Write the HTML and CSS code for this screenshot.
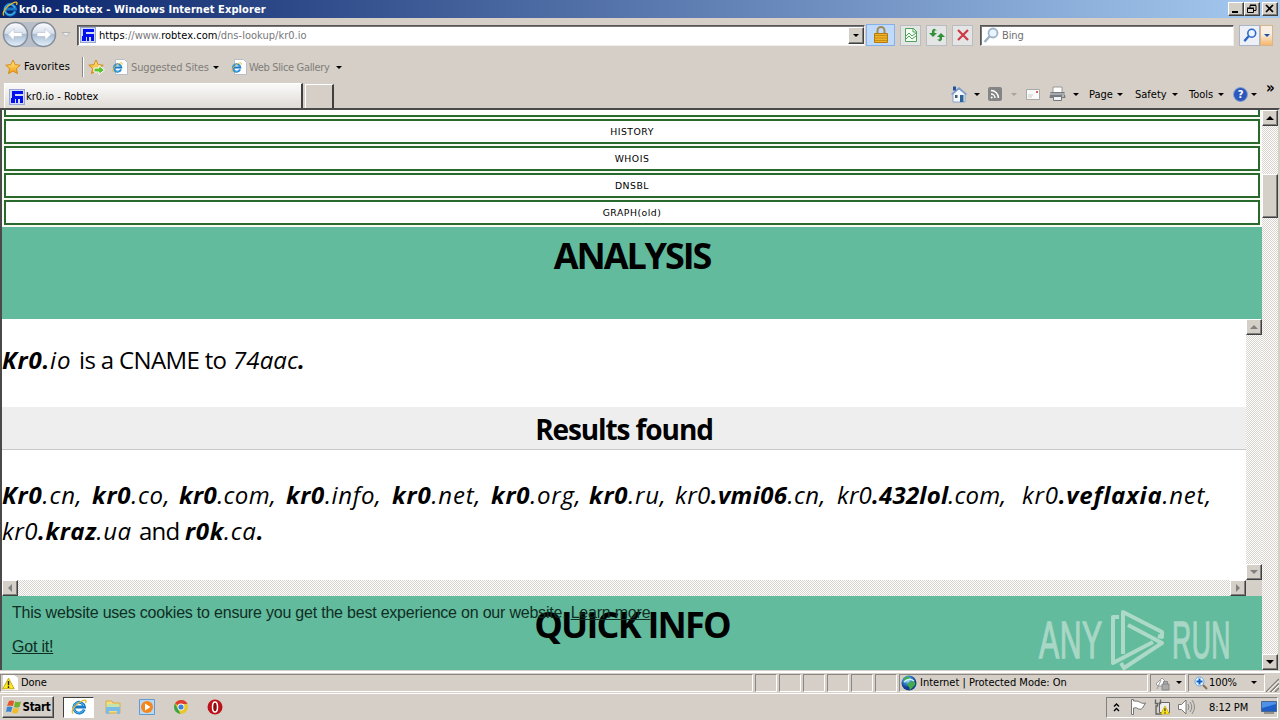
FILE: index.html
```html
<!DOCTYPE html>
<html lang="en">
<head>
<meta charset="utf-8">
<title>kr0.io - Robtex</title>
<link rel="stylesheet" href="styles.css">
</head>
<body>
<svg class="defs" width="0" height="0">
  <defs>
    <linearGradient id="gold" x2="0" y2="1"><stop offset="0" stop-color="#fff08a"/><stop offset="1" stop-color="#f39a12"/></linearGradient>
    <linearGradient id="orb" x2="0" y2="1"><stop offset="0" stop-color="#fdfdfe"/><stop offset=".45" stop-color="#d5dfeb"/><stop offset=".5" stop-color="#a9bdd4"/><stop offset="1" stop-color="#e5f1fc"/></linearGradient>
    <radialGradient id="globe" cx=".4" cy=".3"><stop offset="0" stop-color="#d7f1ff"/><stop offset=".5" stop-color="#3c8fd6"/><stop offset="1" stop-color="#15408c"/></radialGradient>
    <symbol id="ie" viewBox="0 0 16 16"><path d="M13.2 10.6A5.4 5.4 0 1 1 13.5 8H4" fill="none" stroke="#1679c8" stroke-width="2.8"/><path d="M12.9 10.4A5.3 5.3 0 1 1 13 7.2" fill="none" stroke="#55c1f2" stroke-width="1"/><path d="M2 14.5C-.5 12 4 6 9 3s7-2 5.500 1" fill="none" stroke="#e9b92a" stroke-width="1.300"/></symbol>
    <symbol id="iepage" viewBox="0 0 16 16"><path d="M3.500.5h9l3 3v12h-12z" fill="#fff" stroke="#b9bec4"/><use href="#ie" x="0" y="3" width="11" height="11"/></symbol>
    <symbol id="rob" viewBox="0 0 16 16"><path fill="#98a6d4" d="M0 0h16v16H0z"/><path fill="#d2daf2" d="M1 1h14v14H1z"/><path fill="#0010ee" d="M3 2h11v3H6v2h8v7h-3v-4H9v4H7v-4H6v4H2V9h1z"/></symbol>
    <symbol id="star" viewBox="0 0 16 16"><path d="M8 1l2.100 4.700 5.100.5-3.800 3.400 1.100 5L8 12l-4.500 2.600 1.100-5L.8 6.200l5.100-.5z" fill="url(#gold)" stroke="#d78a16"/></symbol>
    <symbol id="mag" viewBox="0 0 16 16"><circle cx="10" cy="6" r="4.500" fill="#e8f5ff" stroke="currentColor" stroke-width="1.800"/><path d="M6.500 9.500L1.500 15" stroke="currentColor" stroke-width="2.600"/></symbol>
    <symbol id="warn" viewBox="0 0 16 16"><path d="M8 1.500l7 13H1z" fill="#ffe81c" stroke="#b89b00"/><path d="M8 5v5M8 11.500v2" stroke="#222" stroke-width="1.800"/></symbol>
  </defs>
</svg>
<div class="screen">
  <header class="title">
    <svg class="title-icon"><use href="#ie"/></svg>
    <span class="title-text">kr0.io - Robtex - Windows Internet Explorer</span>
    <div class="winbtns">
      <div class="btn wb"><svg viewBox="0 0 14 12"><path d="M3 9h6" stroke="#000" stroke-width="2"/></svg></div>
      <div class="btn wb"><svg viewBox="0 0 14 12"><path d="M5 5V2.500h6V7.500H9M5 2h6M2.500 5.500h6v4h-6zM2 5h7" fill="none" stroke="#000"/></svg></div>
      <div class="btn wb last"><svg viewBox="0 0 14 12"><path d="M3 2l7 7M10 2L3 9" stroke="#000" stroke-width="1.700"/></svg></div>
    </div>
  </header>

  <div class="nav">
    <svg class="orbs" viewBox="0 0 72 30">
      <path d="M15 2h28v25H15z" fill="#b9bfc9"/>
      <circle cx="15.500" cy="14.500" r="12" fill="url(#orb)" stroke="#858d99" stroke-width="1.500"/>
      <circle cx="43.500" cy="14.500" r="12" fill="url(#orb)" stroke="#858d99" stroke-width="1.500"/>
      <path d="M8 14.500l6-6v4h8v4h-8v4z" fill="#fff" stroke="#b1bccb" stroke-width=".6"/>
      <path d="M51 14.500l-6-6v4h-8v4h8v4z" fill="#fff" stroke="#b1bccb" stroke-width=".6"/>
      <path d="M62 12.500h8l-4 4z" fill="#eee" stroke="#aaa" stroke-width=".8"/>
    </svg>
    <div class="address">
      <svg class="i16"><use href="#rob"/></svg>
      <span class="url"><b>https</b>://www.<b>robtex.com</b>/dns-lookup/kr0.io</span>
      <div class="btn drop"><i class="arr"></i></div>
    </div>
    <div class="lock"><svg width="16" height="18" viewBox="0 0 16 18"><path d="M4.500 9V4.500a3.500 3.500 0 0 1 7 0V9" fill="none" stroke="#a28a55" stroke-width="2"/><path d="M1.500 7.500h13v9h-13z" fill="#eeb32b" stroke="#b57a0c"/><path d="M2 9.500h12M2 12h12M2 14.500h12" stroke="#c98c13"/></svg></div>
    <div class="tool t1"><svg width="16" height="16" viewBox="0 0 16 16"><path d="M2.500 1.500h8l3 3v10h-11z" fill="#f4fff4" stroke="#4f9f5d"/><path d="M10 1v4h4M3 9l3-3 3 3 4-3M3 12l3-3 3 3 4-3" fill="none" stroke="#4f9f5d"/></svg></div>
    <div class="tool t2"><svg width="16" height="16" viewBox="0 0 16 16"><path d="M8 3.500H5.500V6H8l-4 4-4-4h3V3.500L5 1.500zM8 12.500h2.500V10H8l4-4 4 4h-3v2.500l-2 2z" fill="#2f9138"/></svg></div>
    <div class="tool t3"><svg width="16" height="16" viewBox="0 0 16 16"><path d="M3 3l10 10M13 3L3 13" stroke="#cf3a44" stroke-width="2.200"/></svg></div>
    <div class="search"><svg class="i16 grey"><use href="#mag"/></svg><span>Bing</span></div>
    <div class="go"><svg width="14" height="14"><use href="#mag"/></svg></div>
    <div class="godrop"><i class="arr blue"></i></div>
  </div>

  <div class="favs">
    <svg class="i16"><use href="#star"/></svg><span class="favlabel">Favorites</span>
    <i class="sep"></i>
    <svg class="addfav" width="18" height="16" viewBox="0 0 18 16"><use href="#star" width="16" height="16"/><path d="M6 9h5V6.500l5.500 4.500-5.500 4.500V13H6z" fill="#5ac431" stroke="#fff"/></svg>
    <svg class="i16 sug"><use href="#iepage"/></svg><span class="muted sugtext">Suggested Sites</span><i class="arr"></i>
    <svg class="i16 web"><use href="#iepage"/></svg><span class="muted webtext">Web Slice Gallery</span><i class="arr"></i>
  </div>

  <div class="tabs">
    <div class="tab"><svg class="i16"><use href="#rob"/></svg><span>kr0.io - Robtex</span></div>
    <div class="newtab"></div>
    <div class="cmds">
      <svg class="home" width="18" height="18" viewBox="0 0 18 18"><path d="M3 9l6-5 6 5v8H3z" fill="#f4f8ff" stroke="#8ba4c8"/><path d="M1.500 9.500L9 3l7.500 6.500" fill="none" stroke="#7d9cc9" stroke-width="1.600"/><path d="M3 1.500h3v4H3z" fill="#274f9a"/><path d="M10 10h3.500v7H10z" fill="#2c6496"/><path d="M5 10h2.500v3H5z" fill="#4c5967"/></svg><i class="arr home-a"></i>
      <svg class="rss" width="14" height="14" viewBox="0 0 14 14"><rect width="14" height="14" rx="2" fill="#858585"/><path d="M3 7a4 4 0 0 1 4 4M3 3.500A7.500 7.500 0 0 1 10.500 11" fill="none" stroke="#fff" stroke-width="1.500"/><circle cx="3.700" cy="10.500" r="1" fill="#fff"/></svg><i class="arr dim rss-a"></i>
      <svg class="mail" width="14" height="11" viewBox="0 0 14 11"><path d="M.5.500h13v10H.5z" fill="#fafafa" stroke="#a8a8a8"/><path d="M10 2h2v2h-2z" fill="#c76767"/><path d="M2 6h5M2 8h4" stroke="#ccc"/></svg>
      <svg class="print" width="17" height="16" viewBox="0 0 17 16"><path d="M4 1h9v6H4z" fill="#fff" stroke="#999"/><path d="M1.500 6h14l1 6H.5z" fill="#787c82"/><path d="M1 8h15" stroke="#d2d6da"/><path d="M4.500 10.500h8v4h-8z" fill="#eef5fc" stroke="#777"/><circle cx="14" cy="10" r="1" fill="#c3ccc0"/></svg><i class="arr print-a"></i>
      <span class="page">Page</span><i class="arr page-a"></i>
      <span class="safety">Safety</span><i class="arr safe-a"></i>
      <span class="tools">Tools</span><i class="arr tools-a"></i>
      <div class="help">?</div><i class="arr help-a"></i>
      <span class="more">»</span>
    </div>
  </div>

  <div class="viewport">
    <main class="doc">
      <nav class="menu">
        <div class="item cut"></div>
        <div class="item">HISTORY</div>
        <div class="item">WHOIS</div>
        <div class="item">DNSBL</div>
        <div class="item">GRAPH(old)</div>
      </nav>
      <section class="band analysis"><h1>ANALYSIS</h1></section>
      <section class="frame">
        <div class="frame-doc">
          <p class="first"><em class="c1"><b>Kr0.</b>io</em><span class="c2">is a CNAME to</span><em class="c3">74aac<b>.</b></em></p>
          <h2><span>Results found</span></h2>
          <p class="line"><em class="d1"><b>Kr0</b>.cn,</em><em class="d2"><b>kr0</b>.co,</em><em class="d3"><b>kr0</b>.com,</em><em class="d4"><b>kr0</b>.info,</em><em class="d5"><b>kr0</b>.net,</em><em class="d6"><b>kr0</b>.org,</em><em class="d7"><b>kr0</b>.ru,</em><em class="d8">kr0<b>.vmi06</b>.cn,</em><em class="d9">kr0<b>.432lol</b>.com,</em><em class="d10">kr0<b>.veflaxia</b>.net,</em></p>
          <p class="line"><em class="e1">kr0<b>.kraz</b>.ua</em><span class="e2">and</span><em class="e3"><b>r0k</b>.ca<b>.</b></em></p>
        </div>
        <div class="vbar"><div class="btn sb"><i class="up dis"></i></div><div class="btn sb"><i class="arr big dis"></i></div></div>
        <div class="hbar"><div class="btn sb"><i class="left dis"></i></div><div class="btn sb"><i class="right dis"></i></div></div>
        <div class="corner"></div>
      </section>
      <section class="band quick">
        <h1>QUICK INFO</h1>
        <div class="cookie"><div class="msg">This website uses cookies to ensure you get the best experience on our website. <u>Learn more</u></div><u class="got">Got it!</u></div>
        <div class="mark">
          <span class="any">ANY</span>
          <svg width="56" height="62" viewBox="0 0 56 62"><g fill="none" stroke="#b9dfd0" stroke-width="4" stroke-linejoin="round"><path d="M9 8H3v46L43 33"/><path d="M13 45V3l39 20v5l-4-1"/><path d="M18 16l34 18L14 59l-3-5"/></g></svg>
          <span class="run">RUN</span>
        </div>
      </section>
    </main>
    <div class="scroll"><div class="btn sb"><i class="up"></i></div><div class="btn thumb"></div><div class="btn sb end"><i class="arr big"></i></div></div>
  </div>

  <div class="status">
    <div class="pane done"><svg width="16" height="16" viewBox="0 0 16 16"><path d="M1 0h11l4 3v12H1z" fill="#fff"/><use href="#warn" y="2" width="13" height="13"/></svg><span>Done</span></div>
    <div class="pane s"></div><div class="pane s"></div><div class="pane s"></div><div class="pane s"></div><div class="pane s"></div><div class="pane s"></div>
    <div class="pane zone"><svg width="16" height="16" viewBox="0 0 16 16"><circle cx="8" cy="8" r="7.500" fill="url(#globe)"/><path d="M3 3q4-3 6 0L6 6 3 7zM9 7l4-1q3 3-1 6l-3 3q-1-4-3-6z" fill="#43ac48"/><path d="M3 7q5-5 10-1" fill="none" stroke="#cef2ff" stroke-width="1.500"/></svg><span>Internet | Protected Mode: On</span></div>
    <div class="pane priv"><svg width="16" height="16" viewBox="0 0 16 16"><path d="M1 9l6-6 4 4-3 4H3zM2 14l4-9" fill="#fff" stroke="#999"/><path d="M7 9h7v6H7zM8.500 9V6.500h4V9" fill="#aaa" stroke="#888"/></svg><i class="arr"></i></div>
    <div class="pane zoom"><svg width="14" height="14" viewBox="0 0 14 14"><circle cx="5.500" cy="5.500" r="4.500" fill="#eaf5ff" stroke="#6ea6da"/><path d="M9 9l4 4" stroke="#8b6e52" stroke-width="2"/><path d="M2.500 5.500h6M5.500 2.500v6" stroke="#1263c5" stroke-width="2"/></svg><span>100%</span><i class="arr"></i></div>
    <svg class="grip" width="13" height="14" viewBox="0 0 13 14"><path d="M0 14L13 1M4.500 14L13 5.500M9 14l4-4" stroke="#817d76" stroke-width="1.500"/><path d="M1.500 14L13 2.500M6 14l7-7" stroke="#fff"/></svg>
  </div>

  <footer class="task">
    <div class="btn start"><svg width="16" height="16" viewBox="0 0 16 16"><path d="M3 2q2-1 5 0L7 7Q4 6 1 7z" fill="#e55427"/><path d="M9 2.500q3 1 6 0L13.500 8q-3 1-5.500 0z" fill="#73b02e"/><path d="M1 8q3-1 5.500 0L5 13q-3-1-5 0z" fill="#3985d0"/><path d="M7.500 9q3 1 5.500 0l-1.500 5q-3 1-5.500-.5z" fill="#f3ba24"/></svg><span>Start</span></div>
    <div class="active"><svg class="i16"><use href="#ie"/></svg></div>
    <svg class="q q1" viewBox="0 0 16 16"><path d="M1 2h6l1 2h7v10H1z" fill="#f4dc83" stroke="#d7ad43"/><path d="M2 5h12v4H2z" fill="#c5e3ac"/><path d="M1 8h14v7h-3v-3H4v3H1z" fill="#79bce9"/></svg>
    <svg class="q q2" viewBox="0 0 16 16"><path d="M.5.500h15v15H.5z" fill="#b8d9f6" stroke="#629bd0"/><circle cx="8" cy="8" r="6" fill="#f4861b"/><path d="M6 4.500v7l5.500-3.500z" fill="#fff"/></svg>
    <svg class="q q3" viewBox="0 0 16 16"><circle cx="8" cy="8" r="7" fill="#e8c72c"/><path d="M8 8L2 4.500A7 7 0 0 1 14.500 5H8z" fill="#dd3e31"/><path d="M2 4.500L6 12l1.500 3A7 7 0 0 1 2 4.500z" fill="#37a654"/><circle cx="8" cy="8" r="3.400" fill="#fff"/><circle cx="8" cy="8" r="2.600" fill="#3f80d8"/></svg>
    <svg class="q q4" viewBox="0 0 16 16"><circle cx="8" cy="8" r="7.500" fill="#bd1119"/><ellipse cx="8" cy="8" rx="2.500" ry="5" fill="#8f080e" stroke="#fff" stroke-width="1.500"/></svg>
    <div class="tray">
      <svg class="chev" width="7" height="9" viewBox="0 0 7 9"><path d="M1 3.500L3.500 1 6 3.500M1 8l2.500-2.500L6 8" fill="none" stroke="#000" stroke-width="1.400"/></svg>
      <svg class="flag" width="17" height="16" viewBox="0 0 17 16"><path d="M1.500.5v15h2V9q3-1 5 1 3 1 4-1l3-5q-3 1-5-.500Q8 1.500 3.500 2V.5z" fill="#fff" stroke="#777"/></svg>
      <svg class="net" width="17" height="16" viewBox="0 0 17 16"><path d="M5.500 3.500h10v10h-10z" fill="#eee" stroke="#666"/><path d="M1.500.5v4h2V7H2v8h6M6.500.5v4h-2" fill="none" stroke="#666" stroke-width="1.400"/><use href="#warn" x="6" y="6" width="10" height="10"/></svg>
      <svg class="vol" width="17" height="16" viewBox="0 0 17 16"><path d="M.5 5.500h3L8 1v14l-4.500-4.500h-3z" fill="#fff" stroke="#777"/><path d="M10 5q2 3 0 6M12 3q3.500 5 0 10M14 1q5 7 0 14" fill="none" stroke="#888"/></svg>
      <span class="clock">8:12 PM</span>
      <svg class="desk" width="16" height="13" viewBox="0 0 16 13"><path d="M.5.500h15v10H.5z" fill="#1d5fc6" stroke="#4b6790"/><path d="M1 7L15 3V1H1z" fill="#4d92e8"/><path d="M3 12h10" stroke="#555"/></svg>
    </div>
  </footer>
</div>
</body>
</html>
```

FILE: styles.css
```css
* { box-sizing: border-box; }
body { margin: 0; overflow: hidden; background: #d4d0c8; }
svg { display: block; flex: none; }
.defs { position: absolute; }
.screen { width: 1280px; height: 720px; display: flex; flex-direction: column; background: #d5cfc7; font: 11px/14px "DejaVu Sans Condensed", "DejaVu Sans", sans-serif; letter-spacing: -0.1px; color: #000; white-space: nowrap; }
.i16 { width: 16px; height: 16px; }
.arr { flex: none; width: 0; height: 0; border: 3px solid transparent; border-top-color: #000; border-bottom: 0; }
.arr.big { border-width: 4px 4px 0; }
.arr.dim { border-top-color: #a6a29c; }
.arr.blue { border-top-color: #1c4f9c; }
.up, .left, .right { width: 0; height: 0; border: 4px solid transparent; }
.up { border-top: 0; border-bottom-color: #000; }
.left { border-left: 0; border-right-color: #808080; }
.right { border-right: 0; border-left-color: #808080; }
.arr.dis { border-top-color: #808080; }
.up.dis { border-bottom-color: #808080; }
.btn { display: flex; align-items: center; justify-content: center; flex: none; background: #d4d0c8; border: 1px solid; border-color: #fff #404040 #404040 #fff; box-shadow: inset -1px -1px #808080; }
.sb { width: 16px; height: 16px; }

.title { height: 18px; flex: none; display: flex; align-items: center; padding: 0 2px 0 2px; background: linear-gradient(90deg, #0a246a, #a6caf0); color: #fff; }
.title-icon { width: 16px; height: 16px; }
.title-text { flex: 1; margin-left: 1px; padding-top: 1px; font-weight: bold; letter-spacing: 0.08px; }
.winbtns { display: flex; }
.wb { width: 16px; height: 14px; }
.wb svg { width: 14px; height: 12px; }
.wb.last { margin-left: 2px; }

.nav { height: 36px; flex: none; display: flex; align-items: center; padding: 0 4px 2px 0; }
.orbs { width: 72px; height: 30px; }
.address { width: 788px; height: 21px; margin-left: 5px; display: flex; align-items: center; padding-left: 2px; background: #fff; border: 1px solid; border-color: #555 #eee #eee #555; box-shadow: inset 1px 1px #777; }
.url { flex: 1; margin-left: 3px; padding-top: 2px; color: #77777a; letter-spacing: 0.02px; }
.url b { font-weight: normal; color: #000; }
.drop { width: 16px; height: 17px; margin-right: 0; }
.lock { width: 29px; height: 22px; margin-left: 1px; display: flex; align-items: center; justify-content: center; background: #bfdafb; border: 1px solid #85b1ea; }
.tool { width: 21px; height: 21px; display: flex; align-items: center; justify-content: center; background: #e4e5e5; border: 1px solid #b9bdc2; }
.t1 { margin-left: 5px; }
.t2, .t3 { margin-left: 5px; }
.search { width: 254px; height: 21px; margin-left: 7px; padding-left: 2px; display: flex; align-items: center; gap: 3px; background: #fff; color: #707070; border: 1px solid; border-color: #555 #eee #eee #555; box-shadow: inset 1px 1px #777; }
.search span { padding-top: 2px; }
.grey { color: #9fb3c7; }
.go { width: 21px; height: 21px; margin-left: 5px; display: flex; align-items: center; justify-content: center; background: #edf0f5; border: 1px solid #aab5c8; color: #2a64cb; }
.godrop { width: 13px; height: 21px; display: flex; align-items: center; justify-content: center; background: linear-gradient(#f7eee4 40%, #f7b66b); border: 1px solid #d8b58c; }

.favs { height: 26px; flex: none; display: flex; align-items: center; padding-left: 5px; }
.favlabel { width: 48px; margin-left: 3px; letter-spacing: 0.15px; }
.sep { width: 2px; height: 20px; margin-left: 10px; border-left: 1px solid #888; border-right: 1px solid #fff; }
.addfav { margin-left: 4px; }
.sug { margin-left: 6px; }
.muted { color: #817e7a; margin-left: 3px; padding-top: 1px; letter-spacing: -0.15px; }
.sugtext { width: 82px; }
.web { margin-left: 12px; }
.webtext { width: 87px; letter-spacing: -0.35px; margin-left: 2px; }

.tabs { height: 28px; flex: none; display: flex; align-items: flex-end; padding-left: 4px; }
.tab { width: 299px; height: 25px; display: flex; align-items: center; gap: 1px; padding: 2px 0 0 4px; letter-spacing: 0; background: linear-gradient(#fbfaf9, #dfdbd6); border-top: 1px solid #fff; border-left: 1px solid #fff; border-right: 2px solid #404040; }
.newtab { width: 29px; height: 24px; margin-left: 2px; border: 1px solid #fff; border-right: 2px solid #404040; border-bottom: 0; }
.cmds { height: 28px; margin-left: 616px; display: flex; align-items: center; letter-spacing: 0; }
.cmds span { padding-top: 1px; }
.home-a { margin-left: 6px; }
.rss { margin-left: 8px; }
.rss-a { margin-left: 9px; }
.mail { margin-left: 9px; }
.print { margin-left: 9px; }
.print-a { margin-left: 7px; }
.page { width: 25px; margin-left: 10px; }
.page-a { margin-left: 3px; }
.safety { width: 34px; margin-left: 12px; }
.safe-a { margin-left: 3px; }
.tools { width: 26px; margin-left: 11px; }
.tools-a { margin-left: 3px; }
.help { width: 15px; height: 15px; margin-left: 9px; border-radius: 50%; background: #2c58bb; border: 1px solid #8aa3d4; color: #fff; font-weight: bold; text-align: center; line-height: 13px; }
.help-a { margin-left: 3px; }
.more { margin: -13px 0 0 9px; font-size: 15px; font-weight: bold; }

.viewport { height: 562px; flex: none; display: flex; border-left: 2px solid #4a4a4a; border-top: 2px solid #4a4a4a; border-right: 2px solid #d4d0c8; }
.doc { width: 1260px; height: 560px; background: #fff; overflow: hidden; color: #000; }
.menu { height: 117px; display: flex; flex-direction: column; gap: 2px; padding: 0 2px; background: #f8fbf4; }
.item { height: 25px; flex: none; border: 2px solid #2a692c; background: #fff; text-align: center; font: 9.3px/21px "DejaVu Sans", sans-serif; letter-spacing: 0.5px; }
.item.cut { height: 7px; border-top: 0; }
.band { background: #62bb9d; text-align: center; }
h1, h2, p { margin: 0; }
h1 { font: bold 36px/46px "Open Sans", sans-serif; }
.analysis { height: 92px; padding-top: 6px; }
.analysis h1 { letter-spacing: -2.1px; }
.frame { height: 277px; display: grid; grid-template: 261px 16px / 1244px 16px; }
.frame-doc { background: #fff; overflow: hidden; font: 24px/36px "Open Sans", sans-serif; letter-spacing: -0.4px; }
.first { height: 88px; padding-top: 23px; display: flex; }
.c1 { width: 77px; letter-spacing: 0.8px; } .c2 { width: 154px; letter-spacing: -0.65px; } .c3 { letter-spacing: 0.1px; }
h2 { height: 43px; background: #eee; border-bottom: 1px solid #c9c9c9; text-align: center; font: bold 28px/44px "Open Sans", sans-serif; letter-spacing: -1.1px; }
.line { display: flex; height: 36px; }
h2 + .line { margin-top: 27px; }
.line em, .line span { flex: none; }
.d1 { width: 90px; letter-spacing: 0.85px; }
.d2 { width: 87px; letter-spacing: 0.75px; }
.d3 { width: 107px; letter-spacing: 0.4px; }
.d4 { width: 106px; letter-spacing: 0.65px; }
.d5 { width: 99px; letter-spacing: 0.85px; }
.d6 { width: 98px; letter-spacing: 0.75px; }
.d7 { width: 86px; letter-spacing: 0.75px; }
.d8 { width: 162px; letter-spacing: 0.4px; }
.d9 { width: 185px; letter-spacing: 0.2px; }
.d10 { width: 191px; letter-spacing: 0.75px; }
.e1 { width: 137px; letter-spacing: 0.55px; }
.e2 { width: 46px; letter-spacing: -0.8px; }
.e3 { letter-spacing: 0.7px; }
.vbar, .hbar, .scroll { background: repeating-conic-gradient(#fff 0 25%, #d8d3cc 0 50%) 0 0 / 2px 2px; }
.vbar { display: flex; flex-direction: column; justify-content: space-between; }
.hbar { display: flex; justify-content: space-between; }
.corner { background: #d4d0c8; }
.quick { position: relative; height: 74px; padding-top: 6px; }
.quick h1 { letter-spacing: -1.8px; }
.cookie { position: absolute; left: 10px; top: 7px; text-align: left; font: 16px/19px "Liberation Sans", sans-serif; letter-spacing: -0.21px; color: #102e24; }
.got { display: inline-block; margin-top: 15px; }
.mark { position: absolute; left: 1037px; top: 13px; display: flex; align-items: center; color: #b5dccd; opacity: .85; }
.mark span { font: 52px/62px "Liberation Sans", sans-serif; letter-spacing: 1px; -webkit-text-stroke: 1.4px #b5dccd; }
.any, .run { width: 64px; text-align: left; transform: scaleX(.58); transform-origin: 0 50%; }
.run { transform: scaleX(.51); }
.mark svg { margin: 0 6px 0 7px; }
.scroll { width: 16px; display: flex; flex-direction: column; }
.thumb { width: 16px; height: 44px; margin-top: 48px; }
.end { margin-top: auto; }

.status { height: 24px; flex: none; display: flex; align-items: center; padding-top: 1px; border-top: 1px solid #d4d0c8; border-bottom: 1px solid #fff; box-shadow: inset 0 2px #fff; }
.status span { padding-top: 1px; }
.pane { height: 18px; display: flex; align-items: center; border: 1px solid; border-color: #8b8781 #fff #fff #8b8781; margin-right: 2px; }
.done { width: 753px; padding-left: 1px; gap: 3px; }
.pane.s { width: 22px; }
.zone { width: 249px; gap: 3px; padding-left: 1px; letter-spacing: 0; }
.priv { width: 36px; padding-left: 4px; gap: 5px; }
.zoom { width: 77px; padding-left: 5px; gap: 1px; }
.zoom .arr { margin-left: auto; margin-right: 7px; }
.grip { margin: 4px 0 0 -1px; }

.task { height: 26px; flex: none; display: flex; align-items: center; padding-left: 2px; }
.start { width: 52px; height: 22px; gap: 1px; font-weight: bold; font-size: 11.5px; letter-spacing: -0.3px; }
.active { width: 31px; height: 21px; margin-left: 9px; display: flex; align-items: center; justify-content: center; background: #fff; border: 1px solid; border-color: #404040 #fff #fff #404040; }
.q { width: 16px; height: 16px; }
.q1 { margin-left: 11px; } .q2, .q3 { margin-left: 18px; } .q4 { margin-left: 18px; }
.tray { width: 172px; height: 21px; margin-left: auto; margin-right: 2px; display: flex; align-items: center; padding-left: 6px; border: 1px solid; border-color: #808080 #fff #fff #808080; }
.flag { margin-left: 10px; } .net { margin-left: 7px; } .vol { margin-left: 7px; }
.clock { width: 40px; margin-left: 14px; padding-top: 1px; }
.desk { margin-left: 12px; }
```
